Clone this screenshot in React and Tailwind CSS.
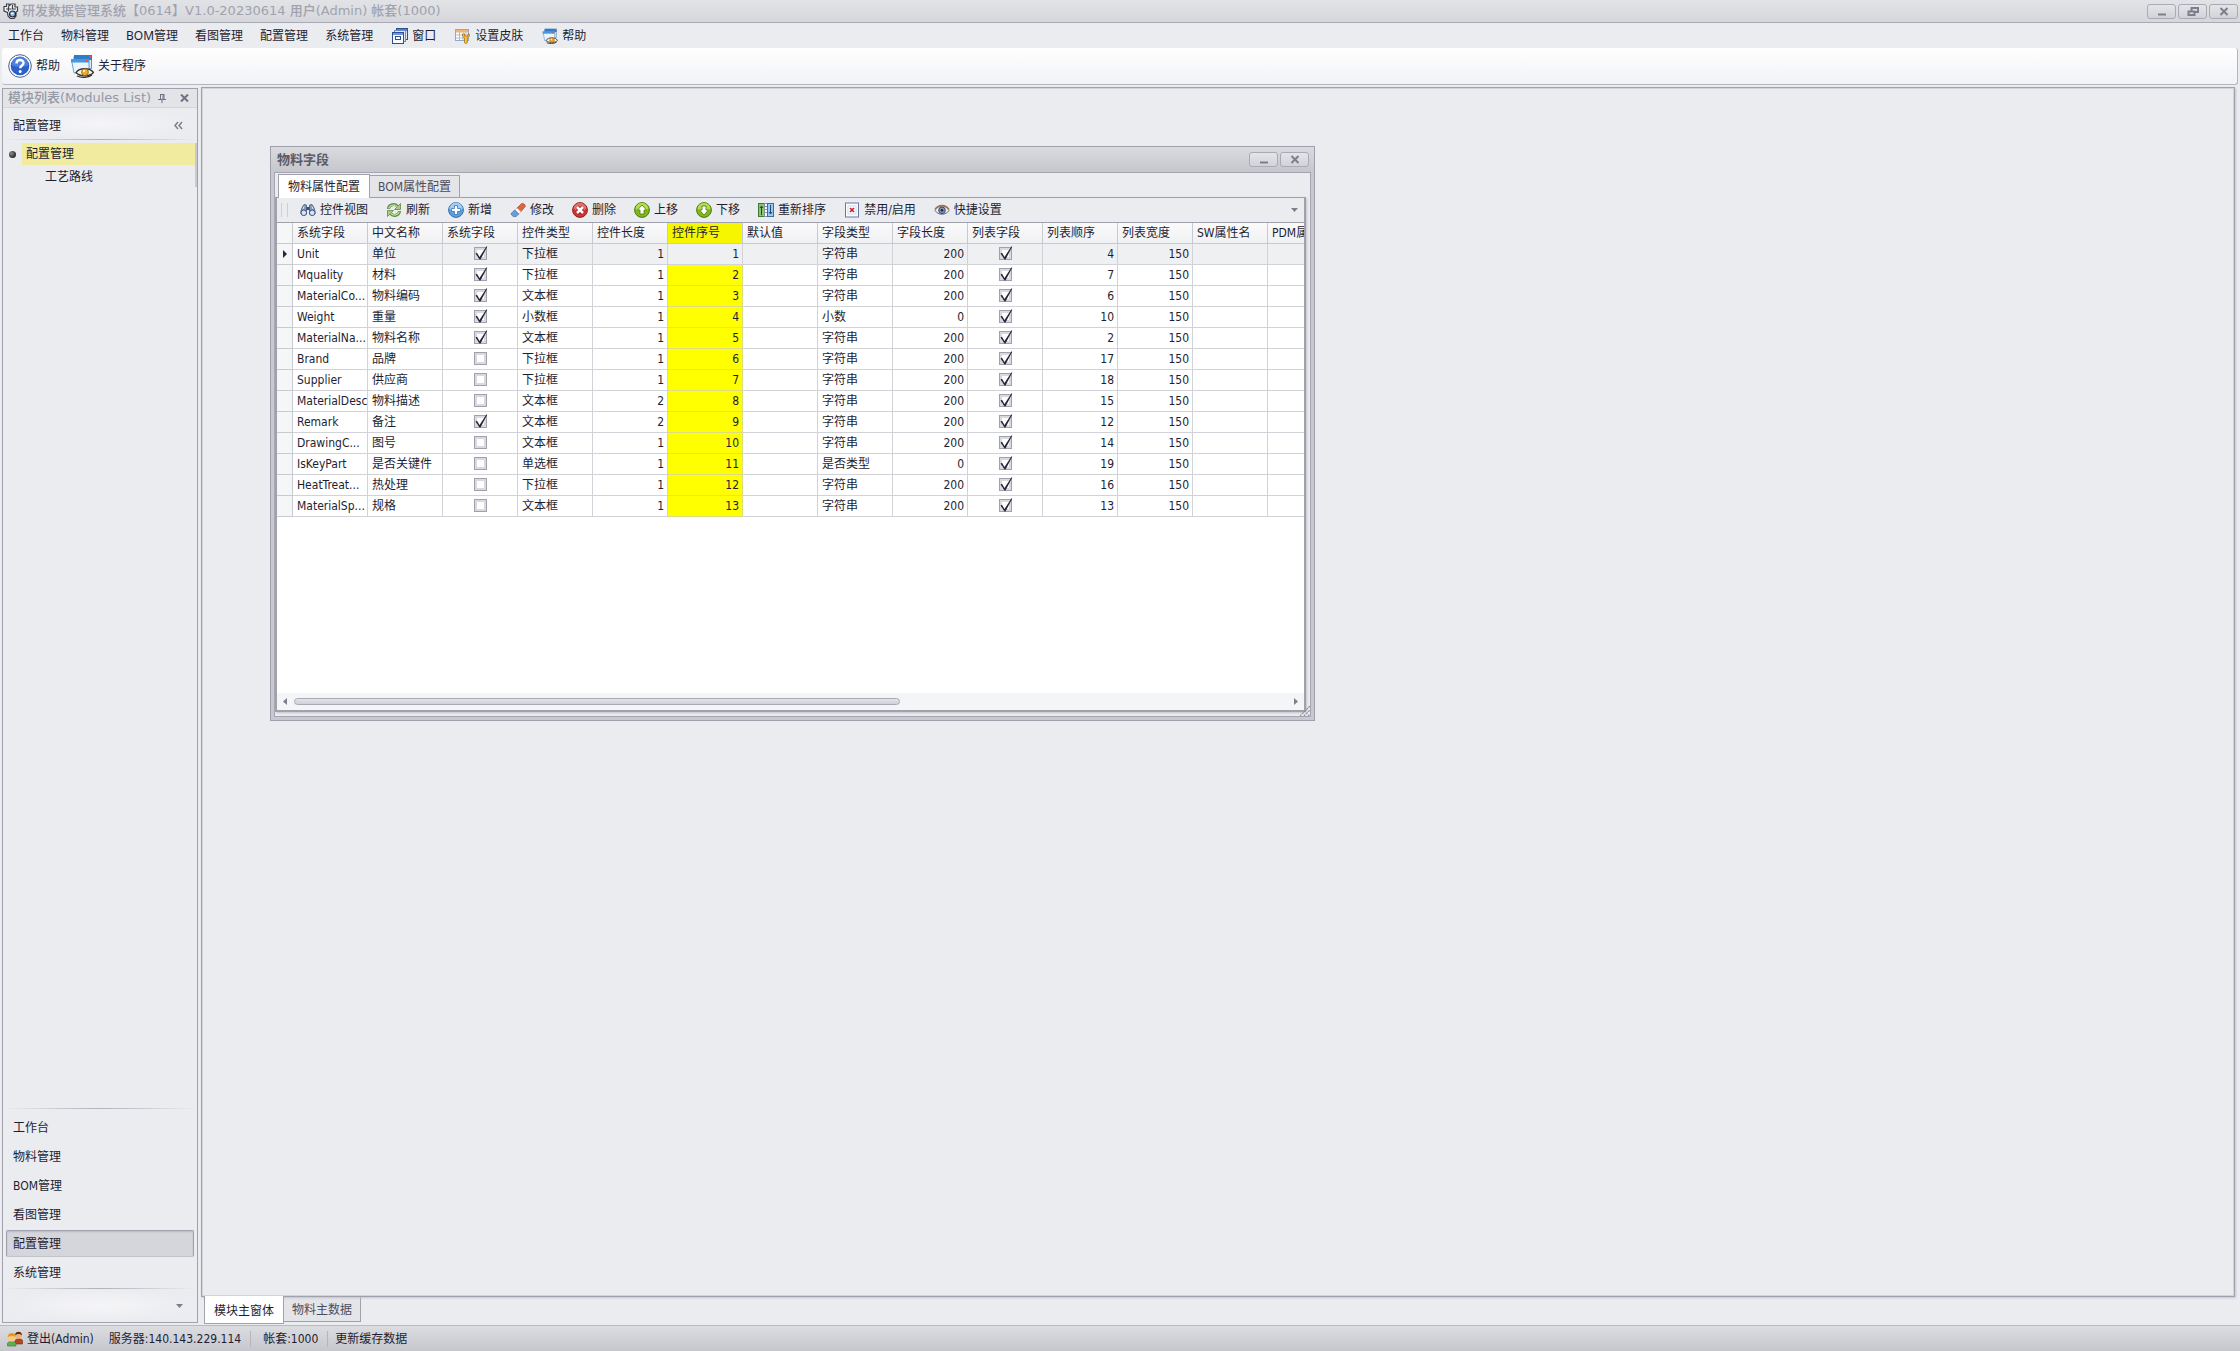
import { clsx } from 'clsx';

const menus = [
    { label: '工作台' },
    { label: '物料管理' },
    { label: 'BOM管理' },
    { label: '看图管理' },
    { label: '配置管理' },
    { label: '系统管理' },
    { label: '窗口', icon: WindowsIcon },
    { label: '设置皮肤', icon: SkinIcon },
    { label: '帮助', icon: AboutIcon },
];

const modules = ['工作台', '物料管理', 'BOM管理', '看图管理', '配置管理', '系统管理'];

const tools = [
    { label: '控件视图', icon: BinocularsIcon },
    { label: '刷新', icon: RefreshIcon },
    { label: '新增', icon: AddIcon },
    { label: '修改', icon: EraserIcon },
    { label: '删除', icon: DeleteIcon },
    { label: '上移', icon: UpIcon },
    { label: '下移', icon: DownIcon },
    { label: '重新排序', icon: SortIcon },
    { label: '禁用/启用', icon: DisableIcon },
    { label: '快捷设置', icon: EyeIcon },
];

const columns = ['系统字段', '中文名称', '系统字段', '控件类型', '控件长度', '控件序号', '默认值', '字段类型', '字段长度', '列表字段', '列表顺序', '列表宽度', 'SW属性名', 'PDM属性名'];

// name, label, system, control, control length, order, type, length, list order
const rows = [
    ['Unit', '单位', true, '下拉框', 1, 1, '字符串', 200, 4],
    ['Mquality', '材料', true, '下拉框', 1, 2, '字符串', 200, 7],
    ['MaterialCo...', '物料编码', true, '文本框', 1, 3, '字符串', 200, 6],
    ['Weight', '重量', true, '小数框', 1, 4, '小数', 0, 10],
    ['MaterialNa...', '物料名称', true, '文本框', 1, 5, '字符串', 200, 2],
    ['Brand', '品牌', false, '下拉框', 1, 6, '字符串', 200, 17],
    ['Supplier', '供应商', false, '下拉框', 1, 7, '字符串', 200, 18],
    ['MaterialDesc', '物料描述', false, '文本框', 2, 8, '字符串', 200, 15],
    ['Remark', '备注', true, '文本框', 2, 9, '字符串', 200, 12],
    ['DrawingC...', '图号', false, '文本框', 1, 10, '字符串', 200, 14],
    ['IsKeyPart', '是否关键件', false, '单选框', 1, 11, '是否类型', 0, 19],
    ['HeatTreat...', '热处理', false, '下拉框', 1, 12, '字符串', 200, 16],
    ['MaterialSp...', '规格', false, '文本框', 1, 13, '字符串', 200, 13],
];

function AppLogo() {
    return (
        <svg width="16" height="16" viewBox="0 0 16 16" className="shrink-0">
            <path d="M1 3.500h2.500V1H6v2l2-2h4v3h2.500v4L13 9v4l-2 2.500H7.500L5 13l-.5-3.500L1 8z" fill="#f4f5f7" stroke="#3d4049" strokeWidth="1.200" />
            <path d="M5.500 3.500v5M3 6h5.500M9.500 2v4H13" stroke="#3d4049" strokeWidth="1.200" fill="none" />
            <circle cx="9.500" cy="11" r="3" fill="#8fb6da" stroke="#22252e" strokeWidth="1.200" />
            <path d="M8 10.500h2.500" stroke="#fff" strokeWidth="1.400" />
        </svg>
    );
}

function WindowsIcon() {
    return (
        <svg width="16" height="16" viewBox="0 0 16 16">
            <rect x="4.500" y=".5" width="11" height="11" fill="#dfe9f8" stroke="#31508f" />
            <rect x="5" y="1" width="10" height="2" fill="#4f7fd0" />
            <rect x="2.500" y="2.500" width="11" height="11" fill="#dfe9f8" stroke="#6d8cc4" />
            <rect x=".5" y="4.500" width="11" height="11" fill="#f6f9ff" stroke="#31508f" />
            <rect x="1" y="5" width="10" height="2" fill="#6b98e0" />
            <rect x="3.500" y="8.500" width="5" height="3" fill="#fff" stroke="#31508f" />
        </svg>
    );
}

function SkinIcon() {
    return (
        <svg width="16" height="16" viewBox="0 0 16 16">
            <rect x=".5" y="1.500" width="13" height="11" fill="#fff" stroke="#8fa9c9" />
            <rect x="1" y="2" width="12" height="2.500" fill="#f2b46c" />
            <path d="M1 7h12M1 10h12M4.500 4v8M8 4v8M11 4v8" stroke="#a9bdd6" />
            <path d="M7.500 6.500c0 2 .8 3 2 3.500v4.500c0 1.200 2.800 1.200 2.800 0V10c1.400-.5 2.200-1.500 2.200-3.500l-1.500-.8v2.500h-3.500V5.700z" fill="#ffc83d" stroke="#a96a12" strokeWidth=".8" />
        </svg>
    );
}

function AboutIcon({ size = 16 }) {
    return (
        <svg width={size} height={size} viewBox="0 0 24 24">
            <path d="M4 2.500h17.500v12H4z" fill="#d5e9fa" stroke="#5f93c8" />
            <path d="M4 1h18v5H4z" fill="#2f7dca" />
            <path d="M1.500 6H19v13H4z" fill="#eaf5fd" stroke="#6fa0cf" />
            <path d="M1 5h18v3.500H1z" fill="#4a97dd" />
            <path d="M19 2h2v2h-2zM15.500 6h2v2h-2z" fill="#e5533c" />
            <path d="M6 18.500c3.500-5 14-5 17.500 0-4 4.500-13.500 4.500-17.500 0z" fill="#f7f4ea" stroke="#3b342c" strokeWidth="1.300" />
            <circle cx="15" cy="18.200" r="3.400" fill="#f0a92d" stroke="#8a5a12" strokeWidth=".8" />
            <circle cx="14" cy="17" r="1.200" fill="#fff1b8" />
            <path d="M7 22c4 2 11 2 15-1" fill="none" stroke="#2d2a28" strokeWidth="1.200" />
        </svg>
    );
}

function HelpIcon() {
    return (
        <svg width="24" height="24" viewBox="0 0 24 24">
            <circle cx="12" cy="12" r="11.300" fill="#fff" stroke="#4a5e8c" />
            <circle cx="12" cy="12" r="9.300" fill="#2c5fca" />
            <path d="M3.500 11a8.500 8.500 0 0 1 17 0c-4 2.500-13 2.500-17 0z" fill="#4f80de" />
            <path d="M8.500 9.500c0-4.500 7-4.500 7-.5 0 2.500-3.300 2.500-3.300 5.200" fill="none" stroke="#fff" strokeWidth="2.400" />
            <circle cx="12.200" cy="17.600" r="1.500" fill="#fff" />
        </svg>
    );
}

function BinocularsIcon() {
    return (
        <svg width="16" height="16" viewBox="0 0 16 16">
            <path d="M4 2.500 6.500 3v9L1 12c-.6-3 1-7 3-9.500zM12 2.500 9.500 3v9l5.500 0c.6-3-1-7-3-9.500z" fill="#8499bb" stroke="#43577d" strokeWidth=".8" />
            <path d="M6.500 5h3v3h-3z" fill="#3a4d72" />
            <circle cx="3.800" cy="10.800" r="2.800" fill="#d3e3f6" stroke="#3d5480" />
            <circle cx="12.200" cy="10.800" r="2.800" fill="#d3e3f6" stroke="#3d5480" />
            <path d="M4 4.500 3 7M12 4.500 13 7" stroke="#dbe7f7" />
        </svg>
    );
}

function RefreshIcon() {
    return (
        <svg width="16" height="16" viewBox="0 0 16 16" fill="none">
            <path d="M2.500 7c.3-5 6.500-5.500 9-2.500M13.500 9c-.3 5-6.500 5.500-9 2.500" stroke="#5f8a45" strokeWidth="3" />
            <path d="M14.500 1.500v6H8.500zM1.500 14.500v-6h6z" fill="#a5cc7f" stroke="#5f8a45" strokeWidth=".8" />
            <path d="M2.800 6.500c.6-4 6-4.500 8.500-1.800M13.200 9.500c-.6 4-6 4.500-8.500 1.800" stroke="#b9dc95" strokeWidth="1.300" />
        </svg>
    );
}

function AddIcon() {
    return (
        <svg width="16" height="16" viewBox="0 0 16 16">
            <circle cx="8" cy="8" r="7.400" fill="#5c9fdc" stroke="#356fae" />
            <path d="M1.500 7a6.500 6.500 0 0 1 13 0c-3 2-10 2-13 0z" fill="#a3cdf2" />
            <path d="M6.500 3.500h3v3h3v3h-3v3h-3v-3h-3v-3h3z" fill="#fff" stroke="#3877b5" strokeWidth=".8" />
        </svg>
    );
}

function EraserIcon() {
    return (
        <svg width="16" height="16" viewBox="0 0 16 16">
            <path d="M6.500 6.500 11.500 1.700c1.500-.9 4.200.8 3.700 2.800L10.500 10z" fill="#e0673c" stroke="#a8401f" strokeWidth=".7" />
            <path d="M4.800 8 7 6l4 3.800-2.200 2.300z" fill="#fafafa" stroke="#b5bac6" strokeWidth=".6" />
            <path d="M1 11.500 4.800 8l4 4.100-2.800 2.400c-2 .8-5-1-5-3z" fill="#6c9dd8" stroke="#3f6da8" strokeWidth=".7" />
        </svg>
    );
}

function DeleteIcon() {
    return (
        <svg width="16" height="16" viewBox="0 0 16 16">
            <circle cx="8" cy="8" r="7.400" fill="#cf3430" stroke="#8f1f1f" />
            <path d="M1.700 7a6.300 6.300 0 0 1 12.600 0c-3 2-9.600 2-12.600 0z" fill="#e2706a" />
            <path d="m5 5 6 6m0-6-6 6" stroke="#8f1f1f" strokeWidth="4" />
            <path d="m5 5 6 6m0-6-6 6" stroke="#fff" strokeWidth="2.600" />
        </svg>
    );
}

function UpIcon() {
    return (
        <svg width="16" height="16" viewBox="0 0 16 16">
            <circle cx="8" cy="8" r="7.400" fill="#80b81c" stroke="#4c7a10" />
            <path d="M1.700 7a6.300 6.300 0 0 1 12.600 0c-3 2-9.600 2-12.600 0z" fill="#b4dc4a" />
            <path d="m8 3 4.500 5H10v4H6V8H3.500z" fill="#fff" stroke="#4c7a10" strokeWidth=".8" />
        </svg>
    );
}

function DownIcon() {
    return (
        <svg width="16" height="16" viewBox="0 0 16 16">
            <circle cx="8" cy="8" r="7.400" fill="#80b81c" stroke="#4c7a10" />
            <path d="M1.700 7a6.300 6.300 0 0 1 12.600 0c-3 2-9.600 2-12.600 0z" fill="#b4dc4a" />
            <path d="m8 13 4.500-5H10V4H6v4H3.500z" fill="#fff" stroke="#4c7a10" strokeWidth=".8" />
        </svg>
    );
}

function SortIcon() {
    return (
        <svg width="16" height="16" viewBox="0 0 16 16">
            <rect x=".5" y="1.500" width="6" height="13" fill="#8cc46a" stroke="#3f7a35" />
            <path d="M3.500 13V4M2 6l1.500-2L5 6" stroke="#1f4f1c" fill="none" />
            <path d="M6.500 1.500h3v13h-3zM6.500 4.500h3m-3 3h3m-3 3h3" fill="#fff" stroke="#8095ad" />
            <rect x="9.500" y="1.500" width="6" height="13" fill="#9cc8ee" stroke="#3a6da3" />
            <path d="M12.500 3v9M11 10l1.500 2 1.500-2" stroke="#1c4a85" fill="none" />
        </svg>
    );
}

function DisableIcon() {
    return (
        <svg width="16" height="16" viewBox="0 0 16 16">
            <rect x="1.500" y="1" width="13" height="14" fill="#fbfcff" stroke="#6478a8" />
            <rect x="4" y="4" width="8" height="8" fill="#fff" stroke="#ccd3e2" strokeWidth=".8" />
            <path d="m6 6 4 4m0-4-4 4" stroke="#c02436" strokeWidth="1.700" />
        </svg>
    );
}

function EyeIcon() {
    return (
        <svg width="16" height="16" viewBox="0 0 16 16">
            <path d="M1 8.500c3-6 11-6 14 0-3 5-11 5-14 0z" fill="#e9ecf3" stroke="#6a7088" />
            <path d="M1 7.500c3-5.500 11-5.500 14 0" fill="none" stroke="#a3704f" strokeWidth="1.500" />
            <circle cx="8" cy="8.300" r="3.300" fill="#7f97ae" stroke="#3d4c5f" />
            <circle cx="8" cy="8.300" r="1.300" fill="#1f2733" />
        </svg>
    );
}

function UsersIcon() {
    return (
        <svg width="16" height="16" viewBox="0 0 16 16">
            <path d="M8 13V9.500c0-2 7.500-2 7.500 0V13z" fill="#b5471f" stroke="#6f2b12" strokeWidth=".6" />
            <circle cx="11.500" cy="4.500" r="3.300" fill="#f0b27a" />
            <path d="M8 4.500c-.3-5 7.300-5 7 0-1.500-2-5-2-7 0z" fill="#5a2c15" />
            <path d="M.5 15v-2.500c0-2.500 8.500-2.500 8.500 0V15z" fill="#5fae55" stroke="#2f7a34" strokeWidth=".6" />
            <circle cx="4.800" cy="6.500" r="4" fill="#fbc981" />
            <path d="M.8 6C.5.5 9.200.5 8.800 6 6.500 4.500 3.500 4.500.8 6z" fill="#e39a1c" />
        </svg>
    );
}

function FrameButton({ label, children }) {
    return (
        <button aria-label={label} className="flex h-[15px] w-[29px] items-center justify-center rounded-[3px] border border-[#a9aab5] bg-gradient-to-b from-[#e4e5e8] to-[#d2d3d7]">
            <svg width="12" height="11" viewBox="0 0 12 11" fill="none" stroke="#7d7e8c" strokeWidth="2">{children}</svg>
        </button>
    );
}

function Check({ checked, label }) {
    return (
        <span className="relative mx-auto mb-0.5 block size-[13px]">
            <input
                type="checkbox"
                aria-label={label}
                defaultChecked={checked}
                className="peer block size-[13px] appearance-none border border-[#a0a1ad] bg-white shadow-[inset_0_0_0_2px_#d9dae0]"
            />
            <svg width="14" height="15" viewBox="0 0 14 15" className="pointer-events-none absolute -top-px left-0 hidden peer-checked:block">
                <path d="m1.500 7.500 1.500-.8L5.500 11 12.500.3l.7.4L6.500 13.500h-1z" fill="#26263a" />
            </svg>
        </span>
    );
}

function DataRow({ row, active }) {
    const [name, label, system, control, size, order, type, length, listOrder] = row;
    const cell = 'h-[21px] border-r border-b border-[#d2d3d8] p-0 pr-[3px] pl-1';
    return (
        <tr className={active ? 'bg-[#eff0f2]' : 'bg-white'}>
            <td className="h-[21px] border-r border-b border-[#c9cad0] bg-[#f5f6f8] p-0">
                {active && (
                    <svg width="4" height="8" viewBox="0 0 4 8" className="mx-auto block">
                        <path d="M0 0v8l4-4z" fill="#26263a" />
                    </svg>
                )}
            </td>
            <td className={clsx(cell, 'bg-white')}>{name}</td>
            <td className={cell}>{label}</td>
            <td className={cell}><Check checked={system} label={`${name} 系统字段`} /></td>
            <td className={cell}>{control}</td>
            <td className={clsx(cell, 'text-right')}>{size}</td>
            <td className={clsx(cell, 'text-right', !active && 'border-[#dcdc80] bg-[#ffff00]')}>{order}</td>
            <td className={cell}></td>
            <td className={cell}>{type}</td>
            <td className={clsx(cell, 'text-right')}>{length}</td>
            <td className={cell}><Check checked label={`${name} 列表字段`} /></td>
            <td className={clsx(cell, 'text-right')}>{listOrder}</td>
            <td className={clsx(cell, 'text-right')}>150</td>
            <td className={cell}></td>
            <td className={cell}></td>
        </tr>
    );
}

function FieldGrid() {
    return (
        <div className="min-h-0 flex-1 overflow-hidden bg-white">
            <table className="w-[1066px] table-fixed border-separate border-spacing-0 whitespace-nowrap">
                <colgroup>
                    <col className="w-4" />
                    {columns.map((c, i) => <col key={i} className="w-[75px]" />)}
                </colgroup>
                <thead>
                    <tr>
                        <th aria-label="行" className="h-[21px] border-r border-b border-[#c9cad0] bg-[#f5f6f8] p-0"></th>
                        {columns.map((c, i) => (
                            <th
                                key={i}
                                className={clsx(
                                    'h-[21px] overflow-hidden border-r border-b border-[#c9cad0] p-0 px-1 text-left font-normal',
                                    c === '控件序号' ? 'bg-[#f6f600]' : 'bg-gradient-to-b from-[#fafafb] to-[#f0f1f4]'
                                )}
                            >
                                {c}
                            </th>
                        ))}
                    </tr>
                </thead>
                <tbody>
                    {rows.map((row, i) => <DataRow key={row[0]} row={row} active={i === 0} />)}
                </tbody>
            </table>
        </div>
    );
}

function FieldWindow() {
    return (
        <section className="absolute top-[58px] left-[68px] flex h-[575px] w-[1045px] flex-col border border-[#9fa0ab] bg-[#c8c9d0] px-[3px] pb-[3px]">
            <header className="-mx-[3px] flex h-[25px] shrink-0 items-center justify-between bg-gradient-to-b from-[#dadbdf] to-[#c6c7cc] pr-[5px] pl-[6px]">
                <h2 className="text-[13px] font-bold text-[#5a5b6a]">物料字段</h2>
                <div className="flex gap-0.5">
                    <FrameButton label="最小化"><path d="M2 8.500h8" /></FrameButton>
                    <FrameButton label="关闭"><path d="m2.500 2 7 7m0-7-7 7" /></FrameButton>
                </div>
            </header>
            <div className="flex min-h-0 flex-1 flex-col border border-[#a5a6b1] bg-[#ebecef] pr-1 pb-1">
                <div className="flex h-6 shrink-0 items-end pl-[3px]" role="tablist">
                    <button role="tab" aria-selected="true" className="relative -mb-px h-6 border border-b-0 border-[#a0a1ac] bg-white px-[9px]">物料属性配置</button>
                    <button role="tab" aria-selected="false" className="h-[22px] border border-b-0 border-l-0 border-[#a0a1ac] bg-[#e4e5e9] px-2 text-[#4b4c5c]">BOM属性配置</button>
                </div>
                <div className="flex min-h-0 flex-1 flex-col border border-r-2 border-b-2 border-l-2 border-[#a0a1ac] shadow-[1px_1px_2px_#c4c5cc]">
                    <div className="flex h-[25px] shrink-0 items-center border-b border-[#a0a1ac] bg-[#ebecef]">
                        <span className="mr-[12px] ml-1 h-3.5 w-[7px] border-x border-[#cfd0d6]"></span>
                        <div className="flex flex-1 gap-[18px]">
                            {tools.map(({ label, icon: Icon }) => (
                                <button key={label} className="flex items-center gap-1"><Icon />{label}</button>
                            ))}
                        </div>
                        <button aria-label="更多" className="mr-1.5">
                            <svg width="7" height="4" viewBox="0 0 7 4"><path d="M0 0h7L3.500 4z" fill="#7d7e8c" /></svg>
                        </button>
                    </div>
                    <FieldGrid />
                    <div className="flex h-[17px] shrink-0 items-center bg-[#f4f5f7] px-1.5">
                        <button aria-label="向左"><svg width="4" height="7" viewBox="0 0 4 7" className="block"><path d="M4 0v7L0 3.500z" fill="#7d7e8c" /></svg></button>
                        <div className="mx-[7px] flex-1">
                            <div className="h-[7px] w-[61%] rounded-full border border-[#a9aab5] bg-gradient-to-b from-[#e3e3e9] to-[#d0d1d8]"></div>
                        </div>
                        <button aria-label="向右"><svg width="4" height="7" viewBox="0 0 4 7" className="block"><path d="M0 0v7l4-3.500z" fill="#7d7e8c" /></svg></button>
                    </div>
                </div>
            </div>
            <svg width="10" height="10" viewBox="0 0 10 10" className="absolute right-[4px] bottom-[4px]">
                <path d="M0 10 10 0M4 10l6-6M8 10l2-2" stroke="#8a8b98" strokeWidth="1.200" strokeDasharray="2 1" />
            </svg>
        </section>
    );
}

function Divider() {
    return <div className="h-px shrink-0 bg-gradient-to-r from-transparent via-[#b0b1ba] to-transparent"></div>;
}

function Sidebar() {
    return (
        <aside className="mt-px mb-0.5 flex w-[196px] shrink-0 flex-col border border-[#a0a1ac]">
            <div className="flex h-[19px] shrink-0 items-center border-b border-[#d3d4d9] bg-[#e3e4e8] pl-[5px] font-['DejaVu_Sans','Noto_Sans_CJK_SC',sans-serif] text-[13px] text-[#9598a5]">
                <h2 className="flex-1 font-medium">模块列表(Modules List)</h2>
                <button aria-label="固定" className="mr-[14px]">
                    <svg width="8" height="9" viewBox="0 0 8 9" fill="none" stroke="#6f7080"><path d="M2.500 0v5M5 0v5M6 0v5M2 .5h4M0 5.500h8M4 6v3" /></svg>
                </button>
                <button aria-label="关闭" className="mr-2">
                    <svg width="9" height="8" viewBox="0 0 9 8" stroke="#6f7080" strokeWidth="2"><path d="m1 .5 7 7m0-7-7 7" /></svg>
                </button>
            </div>
            <div className="flex h-[31px] shrink-0 items-center justify-between bg-radial from-[#f5f5f8] to-[#ebecef] to-70% pt-1 pr-[14px] pl-2.5">
                <h3 className="text-xs">配置管理</h3>
                <button aria-label="折叠">
                    <svg width="9" height="9" viewBox="0 0 9 9" fill="none" stroke="#7d7e8c" strokeWidth="1.500"><path d="M4 1 1 4.500 4 8M8 1 5 4.500 8 8" /></svg>
                </button>
            </div>
            <Divider />
            <ul className="mt-[3px] flex-1">
                <li className="flex h-[22px] items-center border-r-2 border-[#c9cad0]">
                    <span className="mr-[6px] ml-[6px] size-[7px] rounded-full bg-[radial-gradient(circle_at_35%_35%,#8a8a8a,#2b2b2b_70%)]"></span>
                    <a href="#config" className="flex h-full flex-1 items-center bg-[#f0eb9f] pl-1">配置管理</a>
                </li>
                <li className="flex h-[22px] items-center border-r-2 border-[#c9cad0] pt-0.5 pl-[42px]">
                    <a href="#route">工艺路线</a>
                </li>
            </ul>
            <Divider />
            <nav className="mx-[3px] mt-[5px] mb-0.5 flex flex-col gap-[2px]">
                {modules.map((m) => (
                    <button
                        key={m}
                        className={clsx(
                            'h-[27px] rounded-[2px] border pl-[6px] text-left',
                            m === '配置管理' ? 'border-[#a0a1ac] border-b-[#c4c5cc] bg-[#d5d6db] shadow-[inset_0_1px_2px_#b9bac3]' : 'border-transparent'
                        )}
                    >
                        {m}
                    </button>
                ))}
            </nav>
            <Divider />
            <div className="flex h-[33px] shrink-0 items-center justify-end bg-radial from-[#f5f5f8] to-[#ebecef] to-70% pr-3.5">
                <button aria-label="更多模块">
                    <svg width="7" height="4" viewBox="0 0 7 4"><path d="M0 0h7L3.500 4z" fill="#7d7e8c" /></svg>
                </button>
            </div>
        </aside>
    );
}

export default function App() {
    return (
        <div className="flex h-screen flex-col overflow-hidden bg-[#ebecef] font-['DejaVu_Sans_Condensed','Noto_Sans_CJK_SC',sans-serif] text-xs whitespace-nowrap text-[#1e1e32]">
            <header className="flex h-[23px] shrink-0 items-center justify-between border-b border-[#a9aab5] bg-gradient-to-b from-[#e2e3e7] to-[#d6d7dc] pr-0.5 pl-[3px]">
                <div className="flex items-center gap-[3px]">
                    <AppLogo />
                    <h1 className="font-['DejaVu_Sans','Noto_Sans_CJK_SC',sans-serif] text-[13px] font-medium text-[#a0a2ae]">研发数据管理系统【0614】V1.0-20230614 用户(Admin) 帐套(1000)</h1>
                </div>
                <div className="flex gap-0.5">
                    <FrameButton label="最小化"><path d="M2 8.500h8" /></FrameButton>
                    <FrameButton label="还原">
                        <path d="M4.500 5V2H11v4H8.500M1.500 5.500h6v3.500h-6z" />
                    </FrameButton>
                    <FrameButton label="关闭"><path d="m2.500 2 7 7m0-7-7 7" /></FrameButton>
                </div>
            </header>

            <nav className="flex h-[25px] shrink-0 items-center gap-[17px] pl-2 font-['Noto_Sans','Noto_Sans_CJK_SC',sans-serif]">
                {menus.map(({ label, icon: Icon }) => (
                    <button key={label} className={clsx('flex items-center gap-1', Icon && 'pl-0.5')}>
                        {Icon && <Icon />}
                        {label}
                    </button>
                ))}
            </nav>

            <div className="mx-0.5 flex h-[37px] shrink-0 items-center gap-[10px] rounded-[3px] border-r border-b border-[#b4b5be] bg-gradient-to-b from-white to-[#f1f2f6] pl-[6px]">
                <button className="flex items-center gap-1"><HelpIcon />帮助</button>
                <button className="flex items-center gap-1"><AboutIcon size={24} />关于程序</button>
            </div>

            <main className="flex min-h-0 flex-1 gap-[3px] pt-0.5 pr-[5px] pl-0.5">
                <Sidebar />
                <div className="flex min-w-0 flex-1 flex-col">
                    <div className="relative min-h-0 flex-1 overflow-hidden border border-[#a0a1ac] shadow-[inset_0_0_0_1px_#d3d4da,1px_1px_2px_#c4c5cc]">
                        <FieldWindow />
                    </div>
                    <div role="tablist" className="flex h-7 shrink-0 items-start pl-[3px]">
                        <button role="tab" aria-selected="true" className="relative -mt-px h-7 border border-t-0 border-[#a0a1ac] bg-white px-[9px] pt-0.5">模块主窗体</button>
                        <button role="tab" aria-selected="false" className="h-[25px] border border-t-0 border-l-0 border-[#a0a1ac] bg-[#e4e5e9] px-2 pt-0.5 text-[#4b4c5c]">物料主数据</button>
                    </div>
                </div>
            </main>

            <footer className="flex h-[26px] shrink-0 items-center border-t border-[#b8b9c1] bg-gradient-to-b from-[#dcdde0] to-[#c6c6cd] pl-[7px]">
                <button className="flex items-center gap-1"><UsersIcon />登出(Admin)</button>
                <span className="ml-[15px] border-r border-[#b4b5be] pr-[9px]">服务器:140.143.229.114</span>
                <span className="ml-3 border-r border-[#b4b5be] pr-[9px]">帐套:1000</span>
                <button className="ml-[7px]">更新缓存数据</button>
            </footer>
        </div>
    );
}
